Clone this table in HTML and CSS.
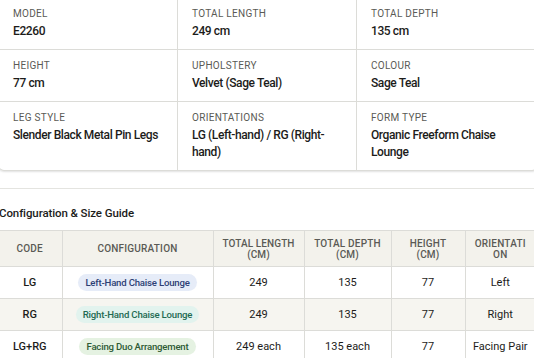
FILE: index.html
```html
<!DOCTYPE html>
<html lang="en">
<head>
  <meta charset="UTF-8" />
  <meta name="viewport" content="width=device-width, initial-scale=1.0" />
  <title>E2260 Chaise Lounge – Specifications</title>
  <link rel="stylesheet" href="styles.css">
</head>
<body>

  <div class="page">
    <div class="specs">
      <div class="spec">
        <div class="label">Model</div>
        <div class="value">E2260</div>
      </div>
      <div class="spec">
        <div class="label">Total Length</div>
        <div class="value">249 cm</div>
      </div>
      <div class="spec">
        <div class="label">Total Depth</div>
        <div class="value">135 cm</div>
      </div>

      <div class="spec">
        <div class="label">Height</div>
        <div class="value">77 cm</div>
      </div>
      <div class="spec">
        <div class="label">Upholstery</div>
        <div class="value">Velvet (Sage Teal)</div>
      </div>
      <div class="spec">
        <div class="label">Colour</div>
        <div class="value">Sage Teal</div>
      </div>

      <div class="spec">
        <div class="label">Leg Style</div>
        <div class="value">Slender Black Metal Pin Legs</div>
      </div>
      <div class="spec">
        <div class="label">Orientations</div>
        <div class="value">LG (Left-hand) / RG (Right-hand)</div>
      </div>
      <div class="spec">
        <div class="label">Form Type</div>
        <div class="value">Organic Freeform Chaise Lounge</div>
      </div>
    </div>

    <hr class="divider">

    <h3 class="guide-title">Configuration &amp; Size Guide</h3>

    <table class="guide">
      <thead>
        <tr>
          <th class="c-code">Code</th>
          <th class="c-conf">Configuration</th>
          <th class="c-len">Total Length (cm)</th>
          <th class="c-dep">Total Depth (cm)</th>
          <th class="c-hgt">Height (cm)</th>
          <th class="c-ori">Orientation</th>
        </tr>
      </thead>
      <tbody>
        <tr>
          <td class="code">LG</td>
          <td><span class="tag tag-left">Left-Hand Chaise Lounge</span></td>
          <td>249</td>
          <td>135</td>
          <td>77</td>
          <td>Left</td>
        </tr>
        <tr>
          <td class="code">RG</td>
          <td><span class="tag tag-right">Right-Hand Chaise Lounge</span></td>
          <td>249</td>
          <td>135</td>
          <td>77</td>
          <td>Right</td>
        </tr>
        <tr>
          <td class="code">LG+RG</td>
          <td><span class="tag tag-duo">Facing Duo Arrangement</span></td>
          <td>249 each</td>
          <td>135 each</td>
          <td>77</td>
          <td>Facing Pair</td>
        </tr>
      </tbody>
    </table>
  </div>

</body>
</html>
```

FILE: styles.css
```css
:root {
  --text: #1c1c1a;
  --muted: #5a5a55;
  --line: #dcdcd8;
  --head-bg: #f3f2ec;
  --stripe: #f6f5f0;
}

* {
  box-sizing: border-box;
  font-family: 'Roboto', 'Liberation Sans', sans-serif;
}

body {
  margin: 0;
  background: #fff;
  color: var(--text);
  overflow: hidden;
}

.page {
  margin: -2px 0 0 -2px;
  width: 540px;
}

/* spec card */

.specs {
  display: grid;
  grid-template-columns: 179px 179px 180px;
  border: 1px solid var(--line);
  border-top: none;
  border-radius: 0 0 6px 6px;
  box-shadow: 0 1px 2px rgba(0, 0, 0, 0.12);
  width: 540px;
}

.spec {
  padding: 9px 14px;
  border-right: 1px solid var(--line);
  border-bottom: 1px solid var(--line);
}

.spec:nth-child(3n) { border-right: none; }
.spec:nth-last-child(-n+3) { border-bottom: none; }

.label {
  font-size: 10px;
  line-height: 13px;
  letter-spacing: 0.3px;
  text-transform: uppercase;
  color: var(--muted);
  margin-bottom: 3px;
}

.value {
  font-size: 12px;
  line-height: 17px;
  font-weight: 500;
  letter-spacing: -0.4px;
}

.divider {
  border: none;
  border-top: 1px solid #e4e4e0;
  margin: 17px 0 0;
}

.guide-title {
  margin: 16px 0 9px 1px;
  font-size: 11.5px;
  line-height: 16px;
  font-weight: 500;
  letter-spacing: -0.1px;
}

/* size table */

.guide {
  border-collapse: collapse;
  table-layout: fixed;
  width: 537px;
  font-size: 11px;
}

.guide th,
.guide td {
  border: 1px solid var(--line);
  text-align: center;
  vertical-align: middle;
}

.guide tr > :first-child { border-left: none; }
.guide tr > :last-child { border-right: none; }

.guide th {
  background: var(--head-bg);
  color: var(--muted);
  font-size: 10px;
  font-weight: 500;
  line-height: 11px;
  letter-spacing: 0.2px;
  text-transform: uppercase;
  height: 36px;
  padding: 0 9px;
  overflow-wrap: anywhere;
}

.guide th.c-len { padding: 0 4px; letter-spacing: 0.1px; }

.guide td {
  height: 32px;
  padding: 0 6px;
}

.guide tbody tr:nth-child(2) td { background: var(--stripe); }

.c-code { width: 64px; }
.c-conf { width: 151px; }
.c-len { width: 91px; }
.c-dep { width: 87px; }
.c-hgt { width: 74px; }

.code { font-weight: 500; }

.tag {
  display: inline-block;
  padding: 2px 7px;
  border-radius: 9px;
  font-size: 9.6px;
  line-height: 13px;
  font-weight: 500;
  letter-spacing: -0.2px;
  white-space: nowrap;
}

.tag-left { background: #e6ecf8; color: #2d3f75; }
.tag-right { background: #e2f3ee; color: #1e6a52; }
.tag-duo { background: #e5f2e2; color: #2e5b35; }
```
